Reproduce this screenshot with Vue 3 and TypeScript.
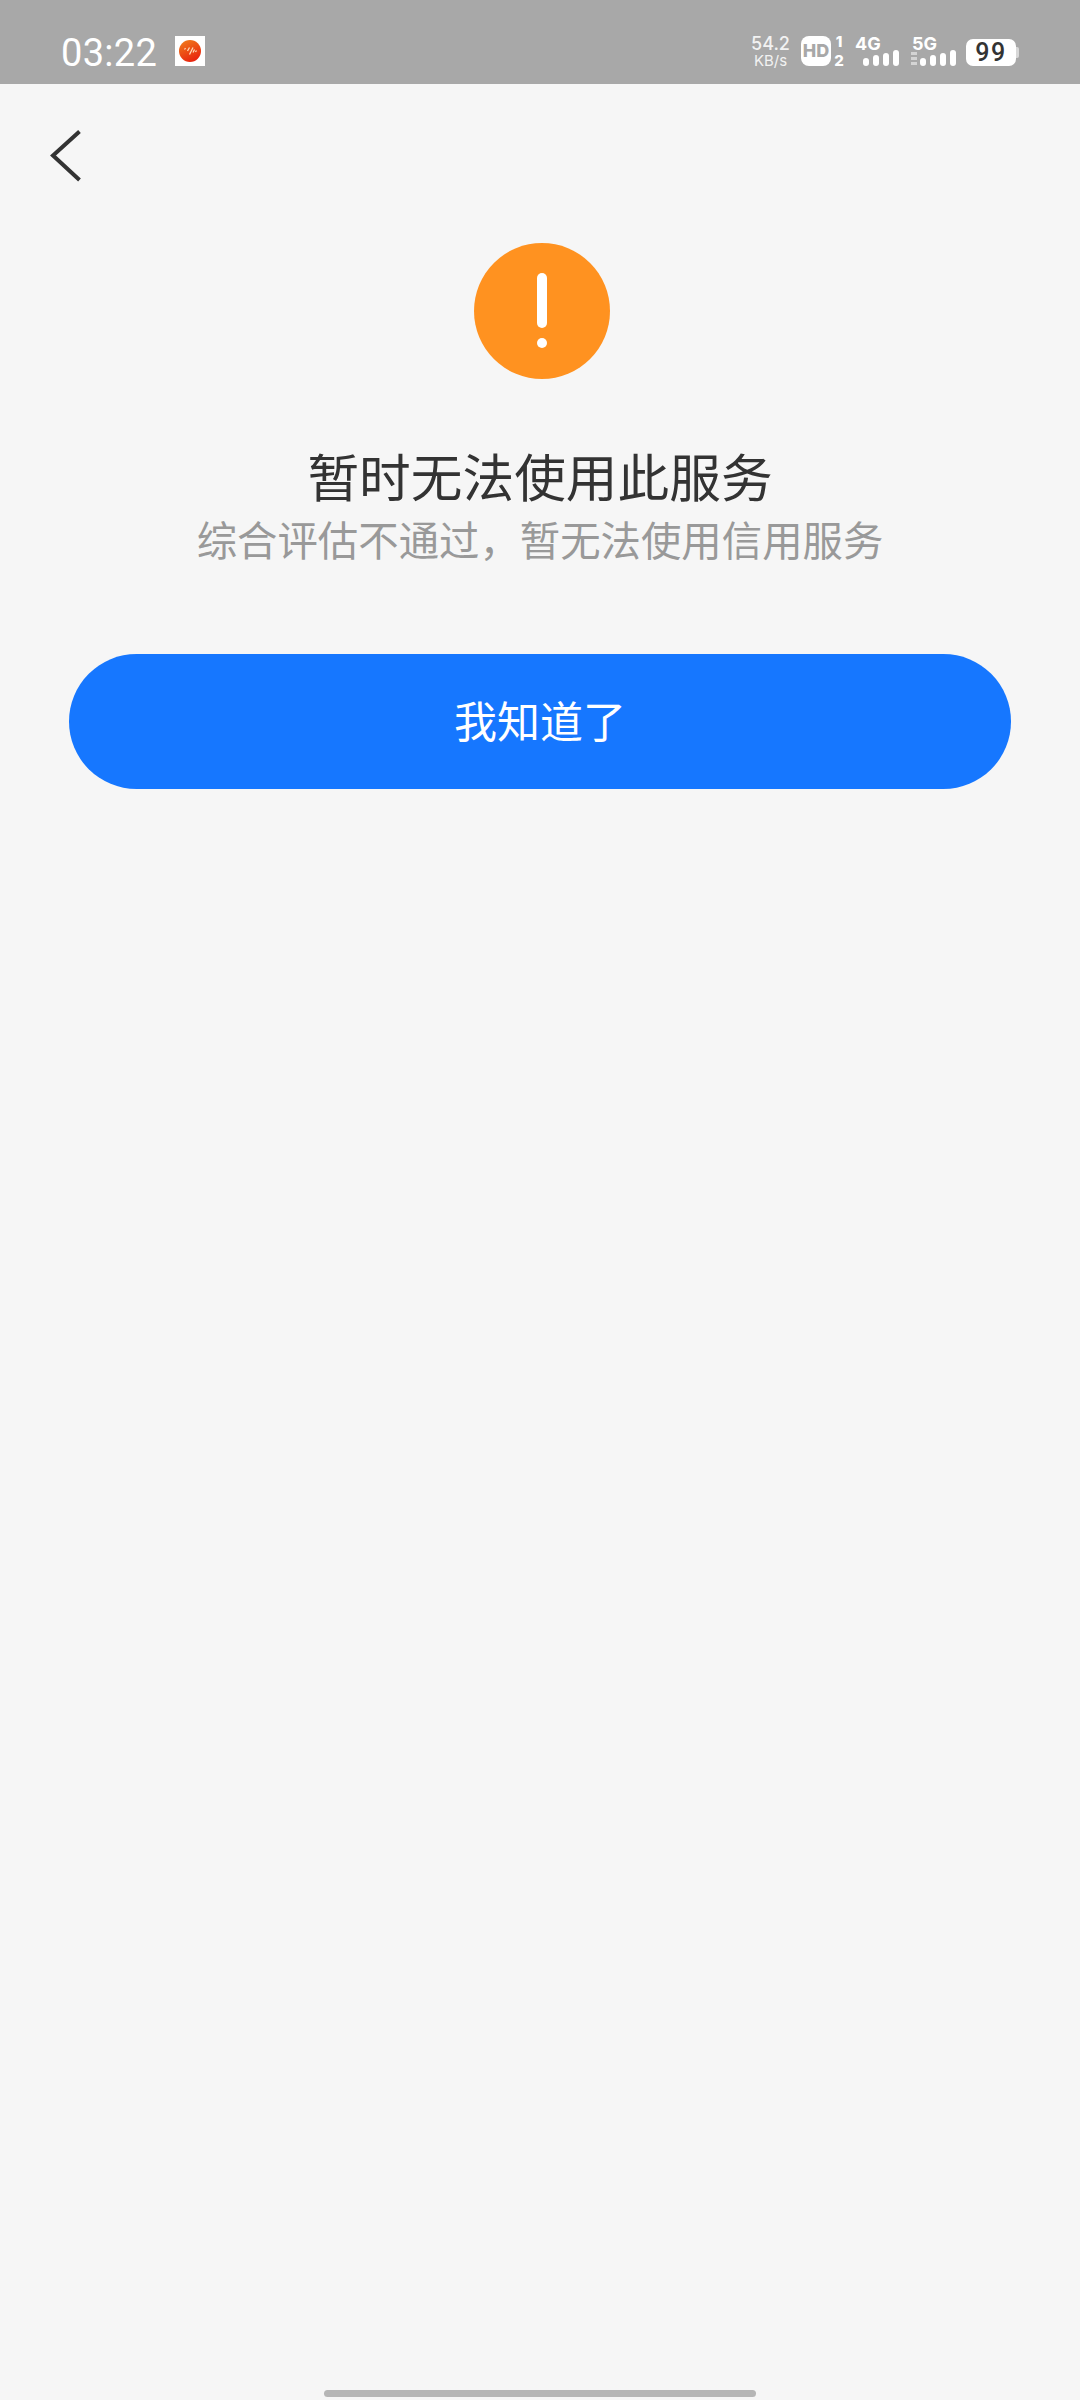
<script setup lang="ts">
const title = '暂时无法使用此服务'
const subtitle = '综合评估不通过\uFF0C暂无法使用信用服务'
const buttonLabel = '我知道了'
const signalHeights: number[] = [8, 11, 13, 16]
</script>

<template>
  <div class="page">
    <header class="status">
      <div class="status-left">
        <span class="time">03:22</span>
        <svg class="notif" width="30" height="30" viewBox="0 0 30 30">
          <defs>
            <linearGradient id="ng" x1="0.2" y1="0" x2="0.7" y2="1">
              <stop offset="0" stop-color="#f07a1c" />
              <stop offset="1" stop-color="#e8200e" />
            </linearGradient>
          </defs>
          <rect width="30" height="30" fill="#fff" />
          <circle cx="15" cy="15" r="11" fill="url(#ng)" />
          <path d="M9.500 13.500l1-1.500M12.500 15l2-3.500M14.500 18.500l3.500-7M18 16.500l1.500-3M20.500 16l1-1.500" stroke="#ffd9b8" stroke-width="1.300" fill="none" />
        </svg>
      </div>
      <div class="status-right">
        <div class="speed">
          <span class="speed-num">54.2</span>
          <span class="speed-unit">KB/s</span>
        </div>
        <div class="hd">
          <span class="hd-badge">HD</span>
          <div class="hd-nums"><span>1</span><span>2</span></div>
        </div>
        <div class="net net-4g">
          <span class="net-label">4G</span>
          <div class="bars">
            <i v-for="h in signalHeights" :key="h" :style="{ height: h + 'px' }"></i>
          </div>
        </div>
        <div class="net net-5g">
          <span class="net-label">5G</span>
          <div class="bars">
            <i v-for="h in signalHeights" :key="h" :style="{ height: h + 'px' }"></i>
          </div>
        </div>
        <div class="battery">
          <span class="battery-body">99</span>
          <span class="battery-nub"></span>
        </div>
      </div>
    </header>

    <nav class="nav">
      <svg class="back" width="34" height="56" viewBox="0 0 34 56">
        <path d="M30.500 3.500 L4 27.500 L30.500 52" fill="none" stroke="#333" stroke-width="4" />
      </svg>
    </nav>

    <main class="main">
      <svg class="alert" width="136" height="136" viewBox="0 0 136 136">
        <circle cx="68" cy="68" r="68" fill="#ff9220" />
        <rect x="63" y="30" width="10" height="55" rx="5" fill="#fff" />
        <circle cx="68" cy="100" r="5" fill="#fff" />
      </svg>
      <h1 class="title">{{ title }}</h1>
      <p class="subtitle">{{ subtitle }}</p>
      <button class="btn" type="button"><span class="btn-label">{{ buttonLabel }}</span></button>
    </main>

    <div class="home-bar"></div>
  </div>
</template>

<style>
html,
body {
  margin: 0;
  background: #f6f6f6;
}
</style>

<style scoped>
.page {
  width: 1080px;
  height: 2400px;
  display: flex;
  flex-direction: column;
  background: #f6f6f6;
  overflow: hidden;
  font-family: "Noto Sans CJK SC", "Noto Sans", sans-serif;
}
.status {
  height: 84px;
  flex: none;
  background: #a8a8a8;
  display: flex;
  justify-content: space-between;
  align-items: center;
  color: #fff;
  font-family: Inter, "Noto Sans", sans-serif;
  box-sizing: border-box;
  padding: 18px 61px 0 61px;
}
.status-left {
  display: flex;
  align-items: center;
  gap: 18px;
}
.time {
  font-family: Roboto, sans-serif;
  font-size: 38px;
  line-height: 44px;
  letter-spacing: 0.3px;
  position: relative;
  top: 2px;
}
.notif {
  display: block;
}
.status-right {
  display: flex;
  align-items: center;
  height: 30px;
}
.speed {
  width: 39px;
  display: flex;
  flex-direction: column;
  align-items: center;
  color: #f2f2f2;
}
.speed-num {
  font-size: 18px;
  line-height: 18px;
  font-weight: 500;
}
.speed-unit {
  font-size: 15px;
  line-height: 15px;
}
.hd {
  display: flex;
  margin-left: 11px;
  gap: 3px;
}
.hd-badge {
  width: 30px;
  height: 30px;
  border-radius: 8px;
  background: #fff;
  color: #a8a8a8;
  font-size: 18px;
  font-weight: 800;
  line-height: 30px;
  text-align: center;
}
.hd-nums {
  display: flex;
  flex-direction: column;
  gap: 1px;
  width: 10px;
  margin: -3px 0;
  font-size: 15px;
  font-weight: 800;
  line-height: 18px;
  text-align: center;
}
.net {
  position: relative;
  width: 44px;
  height: 30px;
}
.net-4g {
  margin-left: 11px;
}
.net-5g {
  margin-left: 13px;
}
.net-label {
  position: absolute;
  left: 0;
  top: -1px;
  font-size: 18px;
  font-weight: 700;
  line-height: 18px;
}
.bars {
  position: absolute;
  right: 0;
  bottom: 0;
  display: flex;
  align-items: flex-end;
  gap: 4px;
}
.bars i {
  display: block;
  width: 6px;
  border-radius: 3px;
  background: #fff;
}
.net-5g .bars::before {
  content: "";
  width: 6px;
  height: 14px;
  margin-right: -1px;
  background: repeating-linear-gradient(to bottom, #d4d4d4 0 3px, transparent 3px 5px);
}
.battery {
  display: flex;
  align-items: center;
  margin-left: 10px;
  margin-top: 3px;
}
.battery-body {
  width: 50px;
  height: 27px;
  border-radius: 7px;
  background: #fff;
  color: #333;
  font-family: Roboto, sans-serif;
  font-size: 25px;
  font-weight: 500;
  letter-spacing: 1.500px;
  line-height: 27px;
  text-align: center;
}
.battery-nub {
  width: 3px;
  height: 11px;
  border-radius: 0 2px 2px 0;
  background: #d8d8d8;
}
.nav {
  flex: none;
  height: 159px;
  box-sizing: border-box;
  padding: 44px 0 0 49px;
}
.back {
  display: block;
}
.main {
  flex: none;
  display: flex;
  flex-direction: column;
  align-items: center;
}
.alert {
  display: block;
  margin-left: 3px;
}
.title {
  margin: 58px 0 0;
  font-size: 51.700px;
  font-weight: 400;
  line-height: 76px;
  color: #333;
}
.subtitle {
  margin: 0;
  font-size: 40.400px;
  line-height: 52px;
  color: #999;
}
.btn {
  margin-top: 89px;
  width: 942px;
  height: 135px;
  border: 0;
  border-radius: 68px;
  background: #1677ff;
  color: #fff;
  font-family: inherit;
  font-size: 43px;
  line-height: 60px;
  padding: 0;
}
.btn-label {
  display: block;
  margin-top: -5px;
}
.home-bar {
  width: 432px;
  height: 7px;
  border-radius: 4px;
  background: #b6b6b6;
  margin: auto 0 3px 324px;
}
</style>
